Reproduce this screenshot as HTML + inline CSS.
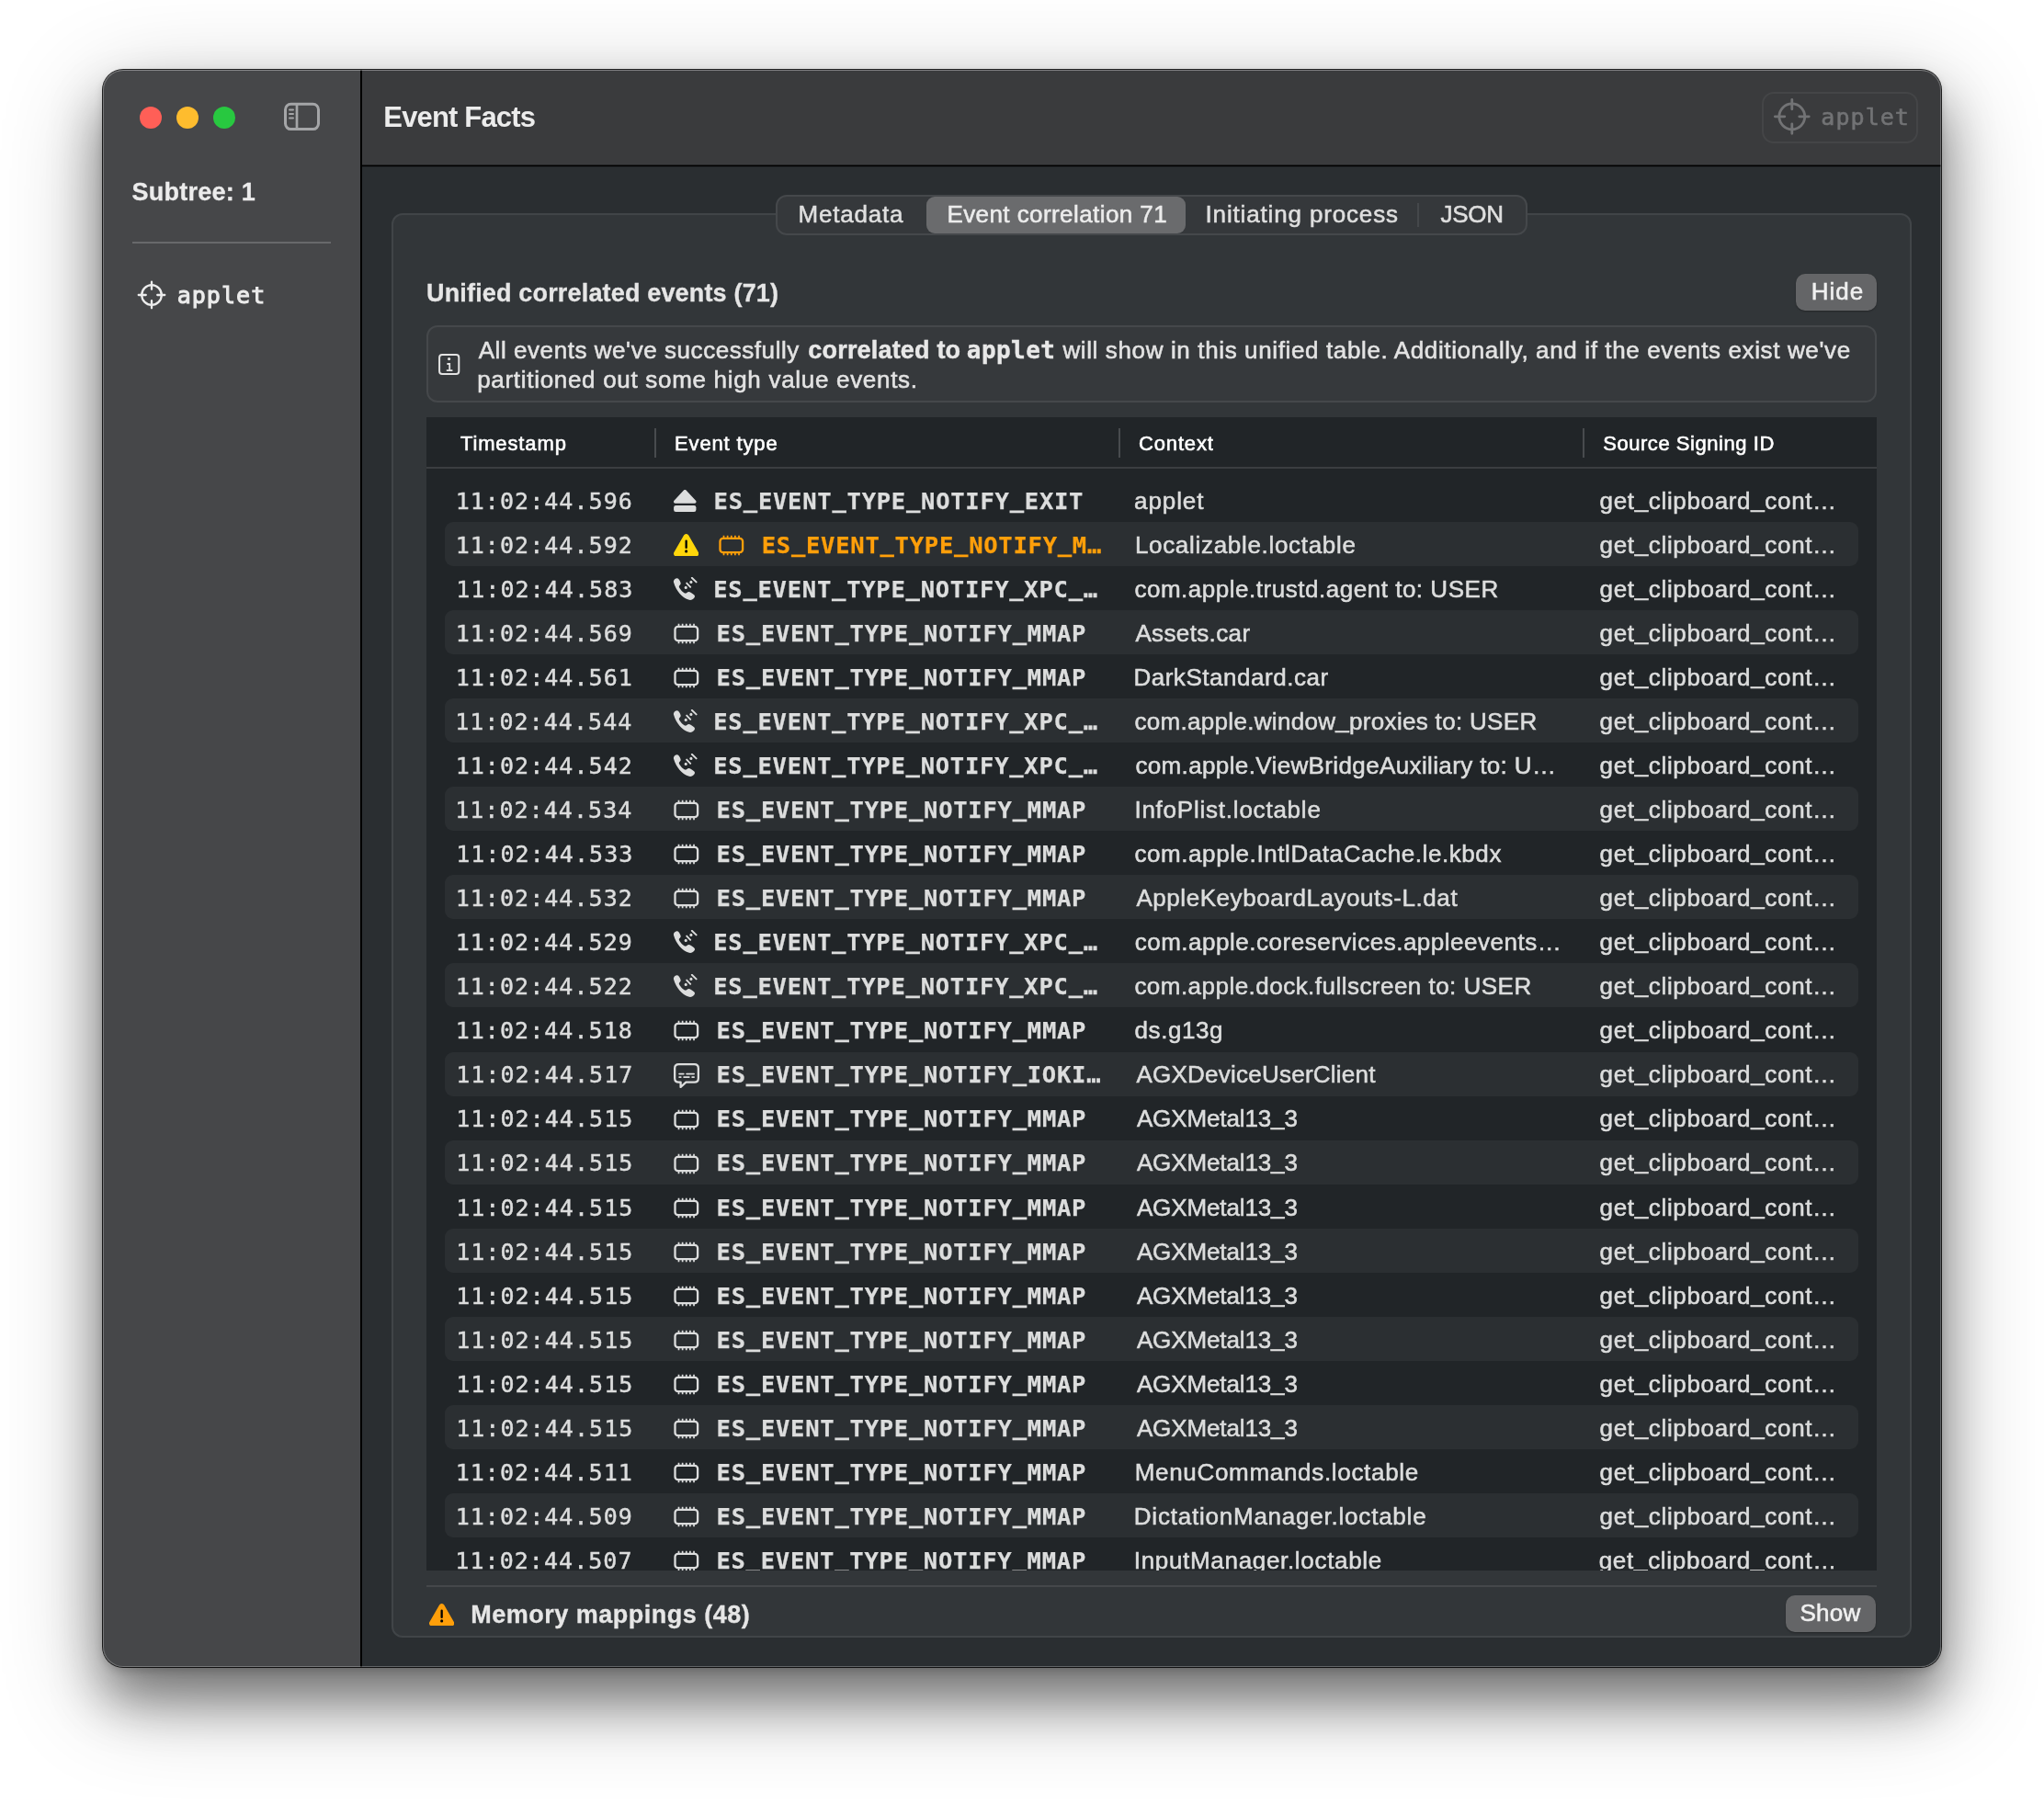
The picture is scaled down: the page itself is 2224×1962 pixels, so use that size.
<!DOCTYPE html><html lang="en"><head><meta charset="utf-8"><title>Event Facts</title><style>
html,body{margin:0;padding:0}
body{width:2224px;height:1962px;background:#fff;position:relative;overflow:hidden;font-kerning:none}
.a{position:absolute;display:block}
.t{position:absolute;display:block;white-space:nowrap;font-kerning:none}
.u{font-style:normal;position:relative;top:-2px}
#shadow{left:112px;top:76px;width:2000px;height:1738px;border-radius:22px;box-shadow:0 0 0 1px rgba(0,0,0,.85),0 4px 10px rgba(0,0,0,.18),0 36px 56px rgba(0,0,0,.42),0 30px 110px rgba(0,0,0,.30)}
#win{left:112px;top:76px;width:2000px;height:1738px;border-radius:22px;overflow:hidden;background:#2a2e31}
#pg{left:-112px;top:-76px;width:2224px;height:1962px;will-change:transform}

</style></head><body>
<div class="a" id="shadow"></div>
<div class="a" id="win"><div class="a" id="pg">
<div class="a" style="left:112px;top:76px;width:280px;height:1738px;background:#464749"></div>
<div class="a" style="left:394px;top:76px;width:1718px;height:104px;background:#3a3b3d"></div>
<div class="a" style="left:394px;top:179px;width:1718px;height:1px;background:rgba(0,0,0,.45)"></div><div class="a" style="left:394px;top:180px;width:1718px;height:1px;background:#000"></div><div class="a" style="left:394px;top:181px;width:1718px;height:1px;background:rgba(0,0,0,.25)"></div>
<div class="a" style="left:392px;top:76px;width:2px;height:1738px;background:#000"></div>
<div class="a" style="left:152px;top:116px;width:24px;height:24px;border-radius:50%;background:#ff5f57"></div>
<div class="a" style="left:192px;top:116px;width:24px;height:24px;border-radius:50%;background:#febc2e"></div>
<div class="a" style="left:232px;top:116px;width:24px;height:24px;border-radius:50%;background:#28c840"></div>
<svg class="a" style="left:307px;top:110px" width="43" height="34" viewBox="307 110 43 34" fill="none" stroke="#a4a5a7"><rect x="310.5" y="113.2" width="36" height="27.4" rx="6" stroke-width="3"/><path d="M323 113V141" stroke-width="2.7"/><path d="M315 119.5H319M315 124H319M315 128.4H319" stroke-width="2" stroke-linecap="round"/></svg>
<div class="a" style="left:144px;top:263px;width:216px;height:2px;background:#68696b"></div>
<svg class="a" style="left:144.50px;top:300.60px" width="40.00" height="40.00" viewBox="-20.00 -20.00 40.00 40.00" fill="none" stroke="#ececec" stroke-width="2.3" stroke-linecap="round"><circle r="10.80"/><path d="M-14.25 0H-6.25M6.25 0H14.25M0 -14.25V-6.25M0 6.25V14.25"/></svg>
<div class="a" style="left:1917px;top:100px;width:170px;height:56px;border-radius:13px;box-sizing:border-box;border:2px solid #444547;background:#3a3b3d"></div>
<svg class="a" style="left:1924.00px;top:101.10px" width="51.60" height="51.60" viewBox="-25.80 -25.80 51.60 51.60" fill="none" stroke="#727375" stroke-width="2.8" stroke-linecap="round"><circle r="13.93"/><path d="M-18.47 0H-7.98M7.98 0H18.47M0 -18.47V-7.98M0 7.98V18.47"/></svg>
<div class="a" style="left:426px;top:232px;width:1654px;height:1550px;border-radius:12px;box-sizing:border-box;border:2px solid #414548;background:#323639"></div>
<div class="a" style="left:844px;top:212px;width:818px;height:44px;border-radius:12px;box-sizing:border-box;border:2px solid #45484b;background:#35383b"></div>
<div class="a" style="left:1008px;top:214px;width:282px;height:40px;border-radius:9px;background:#6a6b6d"></div>
<div class="a" style="left:1542px;top:221px;width:2px;height:26px;background:#45484b"></div>
<div class="a" style="left:1954px;top:298px;width:88px;height:40px;border-radius:10px;background:#646567;box-shadow:0 1px 2px rgba(0,0,0,.3)"></div>
<div class="a" style="left:464px;top:354px;width:1578px;height:84px;border-radius:12px;box-sizing:border-box;border:2px solid #45484b;background:#36393c"></div>
<svg class="a" style="left:476px;top:383px" width="26" height="26" viewBox="476 383 26 26" fill="none" stroke="#e3e3e3"><rect x="478.1" y="385.9" width="21.2" height="21" rx="3" stroke-width="2"/><path d="M486.4 396H489.2V403M485.8 403.2H492.4" stroke-width="1.8"/><circle cx="488.6" cy="390.6" r="1.6" fill="#e3e3e3" stroke="none"/></svg>
<div class="a" style="left:464px;top:454px;width:1578px;height:1255px;background:#212528"></div>
<div class="a" style="left:464px;top:508px;width:1578px;height:2px;background:#3b3e41"></div>
<div class="a" style="left:712px;top:466px;width:2px;height:32px;background:#484b4e"></div>
<div class="a" style="left:1217px;top:466px;width:2px;height:32px;background:#484b4e"></div>
<div class="a" style="left:1722px;top:466px;width:2px;height:32px;background:#484b4e"></div>
<div class="a" style="left:464px;top:510px;width:1578px;height:1199px;overflow:hidden"><div class="a" style="left:-464px;top:-510px;width:2224px;height:1962px">
<svg class="a" style="left:732.70px;top:533.30px" width="25" height="24" viewBox="0 0 25 24" fill="#dcdddd"><path d="M10.93 0.57A1.8 1.8 0 0 1 13.57 0.57L24.02 11.77A1.8 1.8 0 0 1 22.70 14.80L1.80 14.80A1.8 1.8 0 0 1 0.48 11.77Z"/><rect x="0.1" y="17" width="24.3" height="7" rx="2.3"/></svg>
<div class="a" style="left:484px;top:568px;width:1538px;height:48px;border-radius:9px;background:#2b2f32"></div>
<svg class="a" style="left:732.60px;top:580.60px" width="27.3" height="24.4" viewBox="0 0 27.3 24.4"><path d="M11.05 1.50A3.0 3.0 0 0 1 16.25 1.50L26.89 19.90A3.0 3.0 0 0 1 24.30 24.40L3.00 24.40A3.0 3.0 0 0 1 0.41 19.90Z" fill="#ffd60a"/><path d="M13.65 7.7V14.9" stroke="#000" stroke-width="2.3" stroke-linecap="round" fill="none"/><circle cx="13.65" cy="18.9" r="1.55" fill="#000"/></svg>
<svg class="a" style="left:782.00px;top:581.50px" width="28" height="23" viewBox="0 0 28 22.4" fill="none" stroke="#ff9f0a"><rect x="1.5" y="3.6" width="24.6" height="15.2" rx="3.2" stroke-width="2.3"/><path d="M5.50 0.5V3M5.50 19.4V21.9M9.63 0.5V3M9.63 19.4V21.9M13.76 0.5V3M13.76 19.4V21.9M17.89 0.5V3M17.89 19.4V21.9M22.02 0.5V3M22.02 19.4V21.9" stroke-width="1.7"/></svg>
<svg class="a" style="left:732.20px;top:627.80px" width="28" height="26" viewBox="0 0 28 26"><path fill="#dcdddd" d="M1.2 6.2 C0.2 3.6 2.2 1.6 4.4 1.2 C5.6 1 6.4 1.8 7.2 3.2 C8 4.6 9 6.2 8.6 7.6 C8.2 8.8 6.6 9.4 6.8 10.6 C7.4 13 11.2 17 13.4 17.6 C14.8 18 15.4 16.4 17 16 C18.6 15.8 21 17.6 22.8 19 C24.2 20.2 24.4 21.2 23.4 22.6 C21.8 24.8 19.4 25.4 17 24.6 C10.2 22.4 3.4 14.4 1.2 6.2 Z"/><circle cx="14.2" cy="11.4" r="1.55" fill="#dcdddd"/><circle cx="19.9" cy="5.4" r="1.55" fill="#dcdddd"/><path d="M15.2 6.6L19.2 10.8M20.8 0.8L25.6 5.4" stroke="#dcdddd" stroke-width="1.9" stroke-linecap="round" fill="none"/></svg>
<div class="a" style="left:484px;top:664px;width:1538px;height:48px;border-radius:9px;background:#2b2f32"></div>
<svg class="a" style="left:733.00px;top:677.70px" width="28" height="23" viewBox="0 0 28 22.4" fill="none" stroke="#dcdddd"><rect x="1.5" y="3.6" width="24.6" height="15.2" rx="3.2" stroke-width="2.3"/><path d="M5.50 0.5V3M5.50 19.4V21.9M9.63 0.5V3M9.63 19.4V21.9M13.76 0.5V3M13.76 19.4V21.9M17.89 0.5V3M17.89 19.4V21.9M22.02 0.5V3M22.02 19.4V21.9" stroke-width="1.7"/></svg>
<svg class="a" style="left:733.00px;top:725.70px" width="28" height="23" viewBox="0 0 28 22.4" fill="none" stroke="#dcdddd"><rect x="1.5" y="3.6" width="24.6" height="15.2" rx="3.2" stroke-width="2.3"/><path d="M5.50 0.5V3M5.50 19.4V21.9M9.63 0.5V3M9.63 19.4V21.9M13.76 0.5V3M13.76 19.4V21.9M17.89 0.5V3M17.89 19.4V21.9M22.02 0.5V3M22.02 19.4V21.9" stroke-width="1.7"/></svg>
<div class="a" style="left:484px;top:760px;width:1538px;height:48px;border-radius:9px;background:#2b2f32"></div>
<svg class="a" style="left:732.20px;top:771.80px" width="28" height="26" viewBox="0 0 28 26"><path fill="#dcdddd" d="M1.2 6.2 C0.2 3.6 2.2 1.6 4.4 1.2 C5.6 1 6.4 1.8 7.2 3.2 C8 4.6 9 6.2 8.6 7.6 C8.2 8.8 6.6 9.4 6.8 10.6 C7.4 13 11.2 17 13.4 17.6 C14.8 18 15.4 16.4 17 16 C18.6 15.8 21 17.6 22.8 19 C24.2 20.2 24.4 21.2 23.4 22.6 C21.8 24.8 19.4 25.4 17 24.6 C10.2 22.4 3.4 14.4 1.2 6.2 Z"/><circle cx="14.2" cy="11.4" r="1.55" fill="#dcdddd"/><circle cx="19.9" cy="5.4" r="1.55" fill="#dcdddd"/><path d="M15.2 6.6L19.2 10.8M20.8 0.8L25.6 5.4" stroke="#dcdddd" stroke-width="1.9" stroke-linecap="round" fill="none"/></svg>
<svg class="a" style="left:732.20px;top:819.80px" width="28" height="26" viewBox="0 0 28 26"><path fill="#dcdddd" d="M1.2 6.2 C0.2 3.6 2.2 1.6 4.4 1.2 C5.6 1 6.4 1.8 7.2 3.2 C8 4.6 9 6.2 8.6 7.6 C8.2 8.8 6.6 9.4 6.8 10.6 C7.4 13 11.2 17 13.4 17.6 C14.8 18 15.4 16.4 17 16 C18.6 15.8 21 17.6 22.8 19 C24.2 20.2 24.4 21.2 23.4 22.6 C21.8 24.8 19.4 25.4 17 24.6 C10.2 22.4 3.4 14.4 1.2 6.2 Z"/><circle cx="14.2" cy="11.4" r="1.55" fill="#dcdddd"/><circle cx="19.9" cy="5.4" r="1.55" fill="#dcdddd"/><path d="M15.2 6.6L19.2 10.8M20.8 0.8L25.6 5.4" stroke="#dcdddd" stroke-width="1.9" stroke-linecap="round" fill="none"/></svg>
<div class="a" style="left:484px;top:856px;width:1538px;height:48px;border-radius:9px;background:#2b2f32"></div>
<svg class="a" style="left:733.00px;top:869.70px" width="28" height="23" viewBox="0 0 28 22.4" fill="none" stroke="#dcdddd"><rect x="1.5" y="3.6" width="24.6" height="15.2" rx="3.2" stroke-width="2.3"/><path d="M5.50 0.5V3M5.50 19.4V21.9M9.63 0.5V3M9.63 19.4V21.9M13.76 0.5V3M13.76 19.4V21.9M17.89 0.5V3M17.89 19.4V21.9M22.02 0.5V3M22.02 19.4V21.9" stroke-width="1.7"/></svg>
<svg class="a" style="left:733.00px;top:917.70px" width="28" height="23" viewBox="0 0 28 22.4" fill="none" stroke="#dcdddd"><rect x="1.5" y="3.6" width="24.6" height="15.2" rx="3.2" stroke-width="2.3"/><path d="M5.50 0.5V3M5.50 19.4V21.9M9.63 0.5V3M9.63 19.4V21.9M13.76 0.5V3M13.76 19.4V21.9M17.89 0.5V3M17.89 19.4V21.9M22.02 0.5V3M22.02 19.4V21.9" stroke-width="1.7"/></svg>
<div class="a" style="left:484px;top:952px;width:1538px;height:48px;border-radius:9px;background:#2b2f32"></div>
<svg class="a" style="left:733.00px;top:965.70px" width="28" height="23" viewBox="0 0 28 22.4" fill="none" stroke="#dcdddd"><rect x="1.5" y="3.6" width="24.6" height="15.2" rx="3.2" stroke-width="2.3"/><path d="M5.50 0.5V3M5.50 19.4V21.9M9.63 0.5V3M9.63 19.4V21.9M13.76 0.5V3M13.76 19.4V21.9M17.89 0.5V3M17.89 19.4V21.9M22.02 0.5V3M22.02 19.4V21.9" stroke-width="1.7"/></svg>
<svg class="a" style="left:732.20px;top:1011.80px" width="28" height="26" viewBox="0 0 28 26"><path fill="#dcdddd" d="M1.2 6.2 C0.2 3.6 2.2 1.6 4.4 1.2 C5.6 1 6.4 1.8 7.2 3.2 C8 4.6 9 6.2 8.6 7.6 C8.2 8.8 6.6 9.4 6.8 10.6 C7.4 13 11.2 17 13.4 17.6 C14.8 18 15.4 16.4 17 16 C18.6 15.8 21 17.6 22.8 19 C24.2 20.2 24.4 21.2 23.4 22.6 C21.8 24.8 19.4 25.4 17 24.6 C10.2 22.4 3.4 14.4 1.2 6.2 Z"/><circle cx="14.2" cy="11.4" r="1.55" fill="#dcdddd"/><circle cx="19.9" cy="5.4" r="1.55" fill="#dcdddd"/><path d="M15.2 6.6L19.2 10.8M20.8 0.8L25.6 5.4" stroke="#dcdddd" stroke-width="1.9" stroke-linecap="round" fill="none"/></svg>
<div class="a" style="left:484px;top:1048px;width:1538px;height:48px;border-radius:9px;background:#2b2f32"></div>
<svg class="a" style="left:732.20px;top:1059.80px" width="28" height="26" viewBox="0 0 28 26"><path fill="#dcdddd" d="M1.2 6.2 C0.2 3.6 2.2 1.6 4.4 1.2 C5.6 1 6.4 1.8 7.2 3.2 C8 4.6 9 6.2 8.6 7.6 C8.2 8.8 6.6 9.4 6.8 10.6 C7.4 13 11.2 17 13.4 17.6 C14.8 18 15.4 16.4 17 16 C18.6 15.8 21 17.6 22.8 19 C24.2 20.2 24.4 21.2 23.4 22.6 C21.8 24.8 19.4 25.4 17 24.6 C10.2 22.4 3.4 14.4 1.2 6.2 Z"/><circle cx="14.2" cy="11.4" r="1.55" fill="#dcdddd"/><circle cx="19.9" cy="5.4" r="1.55" fill="#dcdddd"/><path d="M15.2 6.6L19.2 10.8M20.8 0.8L25.6 5.4" stroke="#dcdddd" stroke-width="1.9" stroke-linecap="round" fill="none"/></svg>
<svg class="a" style="left:733.00px;top:1109.70px" width="28" height="23" viewBox="0 0 28 22.4" fill="none" stroke="#dcdddd"><rect x="1.5" y="3.6" width="24.6" height="15.2" rx="3.2" stroke-width="2.3"/><path d="M5.50 0.5V3M5.50 19.4V21.9M9.63 0.5V3M9.63 19.4V21.9M13.76 0.5V3M13.76 19.4V21.9M17.89 0.5V3M17.89 19.4V21.9M22.02 0.5V3M22.02 19.4V21.9" stroke-width="1.7"/></svg>
<div class="a" style="left:484px;top:1145px;width:1538px;height:48px;border-radius:9px;background:#2b2f32"></div>
<svg class="a" style="left:733.00px;top:1156.60px" width="28" height="27.5" viewBox="0 0 28 27.5" fill="none" stroke="#dcdddd"><path stroke-width="2.3" stroke-linejoin="round" d="M5.5 1.15 H22.5 Q26.85 1.15 26.85 5.5 V16.2 Q26.85 20.55 22.5 20.55 H13.4 L7.6 26 V20.55 H5.5 Q1.15 20.55 1.15 16.2 V5.5 Q1.15 1.15 5.5 1.15 Z"/><path stroke-width="1.75" stroke-linecap="round" d="M6.1 11.6H10.8M14.1 11.6H22.1M6.1 15H7.8M11.1 15H16.8M20.1 15H22.1"/></svg>
<svg class="a" style="left:733.00px;top:1206.70px" width="28" height="23" viewBox="0 0 28 22.4" fill="none" stroke="#dcdddd"><rect x="1.5" y="3.6" width="24.6" height="15.2" rx="3.2" stroke-width="2.3"/><path d="M5.50 0.5V3M5.50 19.4V21.9M9.63 0.5V3M9.63 19.4V21.9M13.76 0.5V3M13.76 19.4V21.9M17.89 0.5V3M17.89 19.4V21.9M22.02 0.5V3M22.02 19.4V21.9" stroke-width="1.7"/></svg>
<div class="a" style="left:484px;top:1241px;width:1538px;height:48px;border-radius:9px;background:#2b2f32"></div>
<svg class="a" style="left:733.00px;top:1254.70px" width="28" height="23" viewBox="0 0 28 22.4" fill="none" stroke="#dcdddd"><rect x="1.5" y="3.6" width="24.6" height="15.2" rx="3.2" stroke-width="2.3"/><path d="M5.50 0.5V3M5.50 19.4V21.9M9.63 0.5V3M9.63 19.4V21.9M13.76 0.5V3M13.76 19.4V21.9M17.89 0.5V3M17.89 19.4V21.9M22.02 0.5V3M22.02 19.4V21.9" stroke-width="1.7"/></svg>
<svg class="a" style="left:733.00px;top:1302.70px" width="28" height="23" viewBox="0 0 28 22.4" fill="none" stroke="#dcdddd"><rect x="1.5" y="3.6" width="24.6" height="15.2" rx="3.2" stroke-width="2.3"/><path d="M5.50 0.5V3M5.50 19.4V21.9M9.63 0.5V3M9.63 19.4V21.9M13.76 0.5V3M13.76 19.4V21.9M17.89 0.5V3M17.89 19.4V21.9M22.02 0.5V3M22.02 19.4V21.9" stroke-width="1.7"/></svg>
<div class="a" style="left:484px;top:1337px;width:1538px;height:48px;border-radius:9px;background:#2b2f32"></div>
<svg class="a" style="left:733.00px;top:1350.70px" width="28" height="23" viewBox="0 0 28 22.4" fill="none" stroke="#dcdddd"><rect x="1.5" y="3.6" width="24.6" height="15.2" rx="3.2" stroke-width="2.3"/><path d="M5.50 0.5V3M5.50 19.4V21.9M9.63 0.5V3M9.63 19.4V21.9M13.76 0.5V3M13.76 19.4V21.9M17.89 0.5V3M17.89 19.4V21.9M22.02 0.5V3M22.02 19.4V21.9" stroke-width="1.7"/></svg>
<svg class="a" style="left:733.00px;top:1398.70px" width="28" height="23" viewBox="0 0 28 22.4" fill="none" stroke="#dcdddd"><rect x="1.5" y="3.6" width="24.6" height="15.2" rx="3.2" stroke-width="2.3"/><path d="M5.50 0.5V3M5.50 19.4V21.9M9.63 0.5V3M9.63 19.4V21.9M13.76 0.5V3M13.76 19.4V21.9M17.89 0.5V3M17.89 19.4V21.9M22.02 0.5V3M22.02 19.4V21.9" stroke-width="1.7"/></svg>
<div class="a" style="left:484px;top:1433px;width:1538px;height:48px;border-radius:9px;background:#2b2f32"></div>
<svg class="a" style="left:733.00px;top:1446.70px" width="28" height="23" viewBox="0 0 28 22.4" fill="none" stroke="#dcdddd"><rect x="1.5" y="3.6" width="24.6" height="15.2" rx="3.2" stroke-width="2.3"/><path d="M5.50 0.5V3M5.50 19.4V21.9M9.63 0.5V3M9.63 19.4V21.9M13.76 0.5V3M13.76 19.4V21.9M17.89 0.5V3M17.89 19.4V21.9M22.02 0.5V3M22.02 19.4V21.9" stroke-width="1.7"/></svg>
<svg class="a" style="left:733.00px;top:1494.70px" width="28" height="23" viewBox="0 0 28 22.4" fill="none" stroke="#dcdddd"><rect x="1.5" y="3.6" width="24.6" height="15.2" rx="3.2" stroke-width="2.3"/><path d="M5.50 0.5V3M5.50 19.4V21.9M9.63 0.5V3M9.63 19.4V21.9M13.76 0.5V3M13.76 19.4V21.9M17.89 0.5V3M17.89 19.4V21.9M22.02 0.5V3M22.02 19.4V21.9" stroke-width="1.7"/></svg>
<div class="a" style="left:484px;top:1529px;width:1538px;height:48px;border-radius:9px;background:#2b2f32"></div>
<svg class="a" style="left:733.00px;top:1542.70px" width="28" height="23" viewBox="0 0 28 22.4" fill="none" stroke="#dcdddd"><rect x="1.5" y="3.6" width="24.6" height="15.2" rx="3.2" stroke-width="2.3"/><path d="M5.50 0.5V3M5.50 19.4V21.9M9.63 0.5V3M9.63 19.4V21.9M13.76 0.5V3M13.76 19.4V21.9M17.89 0.5V3M17.89 19.4V21.9M22.02 0.5V3M22.02 19.4V21.9" stroke-width="1.7"/></svg>
<svg class="a" style="left:733.00px;top:1590.70px" width="28" height="23" viewBox="0 0 28 22.4" fill="none" stroke="#dcdddd"><rect x="1.5" y="3.6" width="24.6" height="15.2" rx="3.2" stroke-width="2.3"/><path d="M5.50 0.5V3M5.50 19.4V21.9M9.63 0.5V3M9.63 19.4V21.9M13.76 0.5V3M13.76 19.4V21.9M17.89 0.5V3M17.89 19.4V21.9M22.02 0.5V3M22.02 19.4V21.9" stroke-width="1.7"/></svg>
<div class="a" style="left:484px;top:1625px;width:1538px;height:48px;border-radius:9px;background:#2b2f32"></div>
<svg class="a" style="left:733.00px;top:1638.70px" width="28" height="23" viewBox="0 0 28 22.4" fill="none" stroke="#dcdddd"><rect x="1.5" y="3.6" width="24.6" height="15.2" rx="3.2" stroke-width="2.3"/><path d="M5.50 0.5V3M5.50 19.4V21.9M9.63 0.5V3M9.63 19.4V21.9M13.76 0.5V3M13.76 19.4V21.9M17.89 0.5V3M17.89 19.4V21.9M22.02 0.5V3M22.02 19.4V21.9" stroke-width="1.7"/></svg>
<svg class="a" style="left:733.00px;top:1686.70px" width="28" height="23" viewBox="0 0 28 22.4" fill="none" stroke="#dcdddd"><rect x="1.5" y="3.6" width="24.6" height="15.2" rx="3.2" stroke-width="2.3"/><path d="M5.50 0.5V3M5.50 19.4V21.9M9.63 0.5V3M9.63 19.4V21.9M13.76 0.5V3M13.76 19.4V21.9M17.89 0.5V3M17.89 19.4V21.9M22.02 0.5V3M22.02 19.4V21.9" stroke-width="1.7"/></svg>
<span class="t" id="r0a" style="left:495.65px;top:533.00px;font:400 25px/1 'DejaVu Sans Mono','Liberation Mono',monospace;color:#dcdddd;letter-spacing:1.049px;-webkit-text-stroke:0.45px #dcdddd;">11:02:44.596</span>
<span class="t" id="r0b" style="left:776.62px;top:533.00px;font:700 25.5px/1 'DejaVu Sans Mono','Liberation Mono',monospace;color:#dcdddd;letter-spacing:0.748px;-webkit-text-stroke:0.25px #dcdddd;">ES<i class="u">_</i>EVENT<i class="u">_</i>TYPE<i class="u">_</i>NOTIFY<i class="u">_</i>EXIT</span>
<span class="t" id="r0c" style="left:1234.00px;top:532.00px;font:400 26px/1 'Liberation Sans', sans-serif;color:#dcdddd;letter-spacing:0.917px;-webkit-text-stroke:0.55px #dcdddd;">applet</span>
<span class="t" id="r0d" style="left:1740.60px;top:532.00px;font:400 26px/1 'Liberation Sans', sans-serif;color:#dcdddd;letter-spacing:0.655px;-webkit-text-stroke:0.55px #dcdddd;">get<i class="u">_</i>clipboard<i class="u">_</i>cont…</span>
<span class="t" id="r1a" style="left:495.65px;top:581.00px;font:400 25px/1 'DejaVu Sans Mono','Liberation Mono',monospace;color:#dcdddd;letter-spacing:1.049px;-webkit-text-stroke:0.45px #dcdddd;">11:02:44.592</span>
<span class="t" id="r1b" style="left:828.68px;top:581.00px;font:700 25.5px/1 'DejaVu Sans Mono','Liberation Mono',monospace;color:#ff9f0a;letter-spacing:0.748px;-webkit-text-stroke:0.25px #ff9f0a;">ES<i class="u">_</i>EVENT<i class="u">_</i>TYPE<i class="u">_</i>NOTIFY<i class="u">_</i>M…</span>
<span class="t" id="r1c" style="left:1234.90px;top:580.00px;font:400 26px/1 'Liberation Sans', sans-serif;color:#dcdddd;letter-spacing:0.686px;-webkit-text-stroke:0.55px #dcdddd;">Localizable.loctable</span>
<span class="t" id="r1d" style="left:1740.60px;top:580.00px;font:400 26px/1 'Liberation Sans', sans-serif;color:#dcdddd;letter-spacing:0.655px;-webkit-text-stroke:0.55px #dcdddd;">get<i class="u">_</i>clipboard<i class="u">_</i>cont…</span>
<span class="t" id="r2a" style="left:496.15px;top:629.00px;font:400 25px/1 'DejaVu Sans Mono','Liberation Mono',monospace;color:#dcdddd;letter-spacing:1.049px;-webkit-text-stroke:0.45px #dcdddd;">11:02:44.583</span>
<span class="t" id="r2b" style="left:776.20px;top:629.00px;font:700 25.5px/1 'DejaVu Sans Mono','Liberation Mono',monospace;color:#dcdddd;letter-spacing:0.748px;-webkit-text-stroke:0.25px #dcdddd;">ES<i class="u">_</i>EVENT<i class="u">_</i>TYPE<i class="u">_</i>NOTIFY<i class="u">_</i>XPC<i class="u">_</i>…</span>
<span class="t" id="r2c" style="left:1234.40px;top:628.00px;font:400 26px/1 'Liberation Sans', sans-serif;color:#dcdddd;letter-spacing:0.523px;-webkit-text-stroke:0.55px #dcdddd;">com.apple.trustd.agent to: USER</span>
<span class="t" id="r2d" style="left:1740.60px;top:628.00px;font:400 26px/1 'Liberation Sans', sans-serif;color:#dcdddd;letter-spacing:0.655px;-webkit-text-stroke:0.55px #dcdddd;">get<i class="u">_</i>clipboard<i class="u">_</i>cont…</span>
<span class="t" id="r3a" style="left:495.65px;top:677.00px;font:400 25px/1 'DejaVu Sans Mono','Liberation Mono',monospace;color:#dcdddd;letter-spacing:1.049px;-webkit-text-stroke:0.45px #dcdddd;">11:02:44.569</span>
<span class="t" id="r3b" style="left:779.62px;top:677.00px;font:700 25.5px/1 'DejaVu Sans Mono','Liberation Mono',monospace;color:#dcdddd;letter-spacing:0.748px;-webkit-text-stroke:0.25px #dcdddd;">ES<i class="u">_</i>EVENT<i class="u">_</i>TYPE<i class="u">_</i>NOTIFY<i class="u">_</i>MMAP</span>
<span class="t" id="r3c" style="left:1235.40px;top:676.00px;font:400 26px/1 'Liberation Sans', sans-serif;color:#dcdddd;letter-spacing:0.366px;-webkit-text-stroke:0.55px #dcdddd;">Assets.car</span>
<span class="t" id="r3d" style="left:1740.60px;top:676.00px;font:400 26px/1 'Liberation Sans', sans-serif;color:#dcdddd;letter-spacing:0.655px;-webkit-text-stroke:0.55px #dcdddd;">get<i class="u">_</i>clipboard<i class="u">_</i>cont…</span>
<span class="t" id="r4a" style="left:495.65px;top:725.00px;font:400 25px/1 'DejaVu Sans Mono','Liberation Mono',monospace;color:#dcdddd;letter-spacing:1.049px;-webkit-text-stroke:0.45px #dcdddd;">11:02:44.561</span>
<span class="t" id="r4b" style="left:779.62px;top:725.00px;font:700 25.5px/1 'DejaVu Sans Mono','Liberation Mono',monospace;color:#dcdddd;letter-spacing:0.748px;-webkit-text-stroke:0.25px #dcdddd;">ES<i class="u">_</i>EVENT<i class="u">_</i>TYPE<i class="u">_</i>NOTIFY<i class="u">_</i>MMAP</span>
<span class="t" id="r4c" style="left:1233.40px;top:724.00px;font:400 26px/1 'Liberation Sans', sans-serif;color:#dcdddd;letter-spacing:0.527px;-webkit-text-stroke:0.55px #dcdddd;">DarkStandard.car</span>
<span class="t" id="r4d" style="left:1740.60px;top:724.00px;font:400 26px/1 'Liberation Sans', sans-serif;color:#dcdddd;letter-spacing:0.655px;-webkit-text-stroke:0.55px #dcdddd;">get<i class="u">_</i>clipboard<i class="u">_</i>cont…</span>
<span class="t" id="r5a" style="left:495.15px;top:773.00px;font:400 25px/1 'DejaVu Sans Mono','Liberation Mono',monospace;color:#dcdddd;letter-spacing:1.049px;-webkit-text-stroke:0.45px #dcdddd;">11:02:44.544</span>
<span class="t" id="r5b" style="left:776.20px;top:773.00px;font:700 25.5px/1 'DejaVu Sans Mono','Liberation Mono',monospace;color:#dcdddd;letter-spacing:0.748px;-webkit-text-stroke:0.25px #dcdddd;">ES<i class="u">_</i>EVENT<i class="u">_</i>TYPE<i class="u">_</i>NOTIFY<i class="u">_</i>XPC<i class="u">_</i>…</span>
<span class="t" id="r5c" style="left:1234.40px;top:772.00px;font:400 26px/1 'Liberation Sans', sans-serif;color:#dcdddd;letter-spacing:0.313px;-webkit-text-stroke:0.55px #dcdddd;">com.apple.window<i class="u">_</i>proxies to: USER</span>
<span class="t" id="r5d" style="left:1740.60px;top:772.00px;font:400 26px/1 'Liberation Sans', sans-serif;color:#dcdddd;letter-spacing:0.655px;-webkit-text-stroke:0.55px #dcdddd;">get<i class="u">_</i>clipboard<i class="u">_</i>cont…</span>
<span class="t" id="r6a" style="left:495.65px;top:821.00px;font:400 25px/1 'DejaVu Sans Mono','Liberation Mono',monospace;color:#dcdddd;letter-spacing:1.049px;-webkit-text-stroke:0.45px #dcdddd;">11:02:44.542</span>
<span class="t" id="r6b" style="left:776.20px;top:821.00px;font:700 25.5px/1 'DejaVu Sans Mono','Liberation Mono',monospace;color:#dcdddd;letter-spacing:0.748px;-webkit-text-stroke:0.25px #dcdddd;">ES<i class="u">_</i>EVENT<i class="u">_</i>TYPE<i class="u">_</i>NOTIFY<i class="u">_</i>XPC<i class="u">_</i>…</span>
<span class="t" id="r6c" style="left:1235.40px;top:820.00px;font:400 26px/1 'Liberation Sans', sans-serif;color:#dcdddd;letter-spacing:0.369px;-webkit-text-stroke:0.55px #dcdddd;">com.apple.ViewBridgeAuxiliary to: U…</span>
<span class="t" id="r6d" style="left:1740.60px;top:820.00px;font:400 26px/1 'Liberation Sans', sans-serif;color:#dcdddd;letter-spacing:0.655px;-webkit-text-stroke:0.55px #dcdddd;">get<i class="u">_</i>clipboard<i class="u">_</i>cont…</span>
<span class="t" id="r7a" style="left:495.15px;top:869.00px;font:400 25px/1 'DejaVu Sans Mono','Liberation Mono',monospace;color:#dcdddd;letter-spacing:1.049px;-webkit-text-stroke:0.45px #dcdddd;">11:02:44.534</span>
<span class="t" id="r7b" style="left:779.62px;top:869.00px;font:700 25.5px/1 'DejaVu Sans Mono','Liberation Mono',monospace;color:#dcdddd;letter-spacing:0.748px;-webkit-text-stroke:0.25px #dcdddd;">ES<i class="u">_</i>EVENT<i class="u">_</i>TYPE<i class="u">_</i>NOTIFY<i class="u">_</i>MMAP</span>
<span class="t" id="r7c" style="left:1234.40px;top:868.00px;font:400 26px/1 'Liberation Sans', sans-serif;color:#dcdddd;letter-spacing:0.773px;-webkit-text-stroke:0.55px #dcdddd;">InfoPlist.loctable</span>
<span class="t" id="r7d" style="left:1740.60px;top:868.00px;font:400 26px/1 'Liberation Sans', sans-serif;color:#dcdddd;letter-spacing:0.655px;-webkit-text-stroke:0.55px #dcdddd;">get<i class="u">_</i>clipboard<i class="u">_</i>cont…</span>
<span class="t" id="r8a" style="left:496.15px;top:917.00px;font:400 25px/1 'DejaVu Sans Mono','Liberation Mono',monospace;color:#dcdddd;letter-spacing:1.049px;-webkit-text-stroke:0.45px #dcdddd;">11:02:44.533</span>
<span class="t" id="r8b" style="left:779.62px;top:917.00px;font:700 25.5px/1 'DejaVu Sans Mono','Liberation Mono',monospace;color:#dcdddd;letter-spacing:0.748px;-webkit-text-stroke:0.25px #dcdddd;">ES<i class="u">_</i>EVENT<i class="u">_</i>TYPE<i class="u">_</i>NOTIFY<i class="u">_</i>MMAP</span>
<span class="t" id="r8c" style="left:1234.40px;top:916.00px;font:400 26px/1 'Liberation Sans', sans-serif;color:#dcdddd;letter-spacing:0.582px;-webkit-text-stroke:0.55px #dcdddd;">com.apple.IntlDataCache.le.kbdx</span>
<span class="t" id="r8d" style="left:1740.60px;top:916.00px;font:400 26px/1 'Liberation Sans', sans-serif;color:#dcdddd;letter-spacing:0.655px;-webkit-text-stroke:0.55px #dcdddd;">get<i class="u">_</i>clipboard<i class="u">_</i>cont…</span>
<span class="t" id="r9a" style="left:495.65px;top:965.00px;font:400 25px/1 'DejaVu Sans Mono','Liberation Mono',monospace;color:#dcdddd;letter-spacing:1.049px;-webkit-text-stroke:0.45px #dcdddd;">11:02:44.532</span>
<span class="t" id="r9b" style="left:779.62px;top:965.00px;font:700 25.5px/1 'DejaVu Sans Mono','Liberation Mono',monospace;color:#dcdddd;letter-spacing:0.748px;-webkit-text-stroke:0.25px #dcdddd;">ES<i class="u">_</i>EVENT<i class="u">_</i>TYPE<i class="u">_</i>NOTIFY<i class="u">_</i>MMAP</span>
<span class="t" id="r9c" style="left:1236.40px;top:964.00px;font:400 26px/1 'Liberation Sans', sans-serif;color:#dcdddd;letter-spacing:0.555px;-webkit-text-stroke:0.55px #dcdddd;">AppleKeyboardLayouts-L.dat</span>
<span class="t" id="r9d" style="left:1740.60px;top:964.00px;font:400 26px/1 'Liberation Sans', sans-serif;color:#dcdddd;letter-spacing:0.655px;-webkit-text-stroke:0.55px #dcdddd;">get<i class="u">_</i>clipboard<i class="u">_</i>cont…</span>
<span class="t" id="r10a" style="left:495.65px;top:1013.00px;font:400 25px/1 'DejaVu Sans Mono','Liberation Mono',monospace;color:#dcdddd;letter-spacing:1.049px;-webkit-text-stroke:0.45px #dcdddd;">11:02:44.529</span>
<span class="t" id="r10b" style="left:776.20px;top:1013.00px;font:700 25.5px/1 'DejaVu Sans Mono','Liberation Mono',monospace;color:#dcdddd;letter-spacing:0.748px;-webkit-text-stroke:0.25px #dcdddd;">ES<i class="u">_</i>EVENT<i class="u">_</i>TYPE<i class="u">_</i>NOTIFY<i class="u">_</i>XPC<i class="u">_</i>…</span>
<span class="t" id="r10c" style="left:1234.70px;top:1012.00px;font:400 26px/1 'Liberation Sans', sans-serif;color:#dcdddd;letter-spacing:0.516px;-webkit-text-stroke:0.55px #dcdddd;">com.apple.coreservices.appleevents…</span>
<span class="t" id="r10d" style="left:1740.60px;top:1012.00px;font:400 26px/1 'Liberation Sans', sans-serif;color:#dcdddd;letter-spacing:0.655px;-webkit-text-stroke:0.55px #dcdddd;">get<i class="u">_</i>clipboard<i class="u">_</i>cont…</span>
<span class="t" id="r11a" style="left:495.65px;top:1061.00px;font:400 25px/1 'DejaVu Sans Mono','Liberation Mono',monospace;color:#dcdddd;letter-spacing:1.049px;-webkit-text-stroke:0.45px #dcdddd;">11:02:44.522</span>
<span class="t" id="r11b" style="left:776.20px;top:1061.00px;font:700 25.5px/1 'DejaVu Sans Mono','Liberation Mono',monospace;color:#dcdddd;letter-spacing:0.748px;-webkit-text-stroke:0.25px #dcdddd;">ES<i class="u">_</i>EVENT<i class="u">_</i>TYPE<i class="u">_</i>NOTIFY<i class="u">_</i>XPC<i class="u">_</i>…</span>
<span class="t" id="r11c" style="left:1234.40px;top:1060.00px;font:400 26px/1 'Liberation Sans', sans-serif;color:#dcdddd;letter-spacing:0.472px;-webkit-text-stroke:0.55px #dcdddd;">com.apple.dock.fullscreen to: USER</span>
<span class="t" id="r11d" style="left:1740.60px;top:1060.00px;font:400 26px/1 'Liberation Sans', sans-serif;color:#dcdddd;letter-spacing:0.655px;-webkit-text-stroke:0.55px #dcdddd;">get<i class="u">_</i>clipboard<i class="u">_</i>cont…</span>
<span class="t" id="r12a" style="left:495.65px;top:1109.00px;font:400 25px/1 'DejaVu Sans Mono','Liberation Mono',monospace;color:#dcdddd;letter-spacing:1.049px;-webkit-text-stroke:0.45px #dcdddd;">11:02:44.518</span>
<span class="t" id="r12b" style="left:779.62px;top:1109.00px;font:700 25.5px/1 'DejaVu Sans Mono','Liberation Mono',monospace;color:#dcdddd;letter-spacing:0.748px;-webkit-text-stroke:0.25px #dcdddd;">ES<i class="u">_</i>EVENT<i class="u">_</i>TYPE<i class="u">_</i>NOTIFY<i class="u">_</i>MMAP</span>
<span class="t" id="r12c" style="left:1234.60px;top:1108.00px;font:400 26px/1 'Liberation Sans', sans-serif;color:#dcdddd;letter-spacing:0.556px;-webkit-text-stroke:0.55px #dcdddd;">ds.g13g</span>
<span class="t" id="r12d" style="left:1740.60px;top:1108.00px;font:400 26px/1 'Liberation Sans', sans-serif;color:#dcdddd;letter-spacing:0.655px;-webkit-text-stroke:0.55px #dcdddd;">get<i class="u">_</i>clipboard<i class="u">_</i>cont…</span>
<span class="t" id="r13a" style="left:496.15px;top:1157.00px;font:400 25px/1 'DejaVu Sans Mono','Liberation Mono',monospace;color:#dcdddd;letter-spacing:1.049px;-webkit-text-stroke:0.45px #dcdddd;">11:02:44.517</span>
<span class="t" id="r13b" style="left:779.60px;top:1157.00px;font:700 25.5px/1 'DejaVu Sans Mono','Liberation Mono',monospace;color:#dcdddd;letter-spacing:0.748px;-webkit-text-stroke:0.25px #dcdddd;">ES<i class="u">_</i>EVENT<i class="u">_</i>TYPE<i class="u">_</i>NOTIFY<i class="u">_</i>IOKI…</span>
<span class="t" id="r13c" style="left:1236.50px;top:1156.00px;font:400 26px/1 'Liberation Sans', sans-serif;color:#dcdddd;letter-spacing:0.232px;-webkit-text-stroke:0.55px #dcdddd;">AGXDeviceUserClient</span>
<span class="t" id="r13d" style="left:1740.60px;top:1156.00px;font:400 26px/1 'Liberation Sans', sans-serif;color:#dcdddd;letter-spacing:0.655px;-webkit-text-stroke:0.55px #dcdddd;">get<i class="u">_</i>clipboard<i class="u">_</i>cont…</span>
<span class="t" id="r14a" style="left:496.15px;top:1205.00px;font:400 25px/1 'DejaVu Sans Mono','Liberation Mono',monospace;color:#dcdddd;letter-spacing:1.049px;-webkit-text-stroke:0.45px #dcdddd;">11:02:44.515</span>
<span class="t" id="r14b" style="left:779.62px;top:1205.00px;font:700 25.5px/1 'DejaVu Sans Mono','Liberation Mono',monospace;color:#dcdddd;letter-spacing:0.748px;-webkit-text-stroke:0.25px #dcdddd;">ES<i class="u">_</i>EVENT<i class="u">_</i>TYPE<i class="u">_</i>NOTIFY<i class="u">_</i>MMAP</span>
<span class="t" id="r14c" style="left:1236.90px;top:1204.00px;font:400 26px/1 'Liberation Sans', sans-serif;color:#dcdddd;letter-spacing:-0.124px;-webkit-text-stroke:0.55px #dcdddd;">AGXMetal13<i class="u">_</i>3</span>
<span class="t" id="r14d" style="left:1740.60px;top:1204.00px;font:400 26px/1 'Liberation Sans', sans-serif;color:#dcdddd;letter-spacing:0.655px;-webkit-text-stroke:0.55px #dcdddd;">get<i class="u">_</i>clipboard<i class="u">_</i>cont…</span>
<span class="t" id="r15a" style="left:496.15px;top:1253.00px;font:400 25px/1 'DejaVu Sans Mono','Liberation Mono',monospace;color:#dcdddd;letter-spacing:1.049px;-webkit-text-stroke:0.45px #dcdddd;">11:02:44.515</span>
<span class="t" id="r15b" style="left:779.62px;top:1253.00px;font:700 25.5px/1 'DejaVu Sans Mono','Liberation Mono',monospace;color:#dcdddd;letter-spacing:0.748px;-webkit-text-stroke:0.25px #dcdddd;">ES<i class="u">_</i>EVENT<i class="u">_</i>TYPE<i class="u">_</i>NOTIFY<i class="u">_</i>MMAP</span>
<span class="t" id="r15c" style="left:1236.90px;top:1252.00px;font:400 26px/1 'Liberation Sans', sans-serif;color:#dcdddd;letter-spacing:-0.124px;-webkit-text-stroke:0.55px #dcdddd;">AGXMetal13<i class="u">_</i>3</span>
<span class="t" id="r15d" style="left:1740.60px;top:1252.00px;font:400 26px/1 'Liberation Sans', sans-serif;color:#dcdddd;letter-spacing:0.655px;-webkit-text-stroke:0.55px #dcdddd;">get<i class="u">_</i>clipboard<i class="u">_</i>cont…</span>
<span class="t" id="r16a" style="left:496.15px;top:1302.00px;font:400 25px/1 'DejaVu Sans Mono','Liberation Mono',monospace;color:#dcdddd;letter-spacing:1.049px;-webkit-text-stroke:0.45px #dcdddd;">11:02:44.515</span>
<span class="t" id="r16b" style="left:779.62px;top:1302.00px;font:700 25.5px/1 'DejaVu Sans Mono','Liberation Mono',monospace;color:#dcdddd;letter-spacing:0.748px;-webkit-text-stroke:0.25px #dcdddd;">ES<i class="u">_</i>EVENT<i class="u">_</i>TYPE<i class="u">_</i>NOTIFY<i class="u">_</i>MMAP</span>
<span class="t" id="r16c" style="left:1236.90px;top:1301.00px;font:400 26px/1 'Liberation Sans', sans-serif;color:#dcdddd;letter-spacing:-0.124px;-webkit-text-stroke:0.55px #dcdddd;">AGXMetal13<i class="u">_</i>3</span>
<span class="t" id="r16d" style="left:1740.60px;top:1301.00px;font:400 26px/1 'Liberation Sans', sans-serif;color:#dcdddd;letter-spacing:0.655px;-webkit-text-stroke:0.55px #dcdddd;">get<i class="u">_</i>clipboard<i class="u">_</i>cont…</span>
<span class="t" id="r17a" style="left:496.15px;top:1350.00px;font:400 25px/1 'DejaVu Sans Mono','Liberation Mono',monospace;color:#dcdddd;letter-spacing:1.049px;-webkit-text-stroke:0.45px #dcdddd;">11:02:44.515</span>
<span class="t" id="r17b" style="left:779.62px;top:1350.00px;font:700 25.5px/1 'DejaVu Sans Mono','Liberation Mono',monospace;color:#dcdddd;letter-spacing:0.748px;-webkit-text-stroke:0.25px #dcdddd;">ES<i class="u">_</i>EVENT<i class="u">_</i>TYPE<i class="u">_</i>NOTIFY<i class="u">_</i>MMAP</span>
<span class="t" id="r17c" style="left:1236.90px;top:1349.00px;font:400 26px/1 'Liberation Sans', sans-serif;color:#dcdddd;letter-spacing:-0.124px;-webkit-text-stroke:0.55px #dcdddd;">AGXMetal13<i class="u">_</i>3</span>
<span class="t" id="r17d" style="left:1740.60px;top:1349.00px;font:400 26px/1 'Liberation Sans', sans-serif;color:#dcdddd;letter-spacing:0.655px;-webkit-text-stroke:0.55px #dcdddd;">get<i class="u">_</i>clipboard<i class="u">_</i>cont…</span>
<span class="t" id="r18a" style="left:496.15px;top:1398.00px;font:400 25px/1 'DejaVu Sans Mono','Liberation Mono',monospace;color:#dcdddd;letter-spacing:1.049px;-webkit-text-stroke:0.45px #dcdddd;">11:02:44.515</span>
<span class="t" id="r18b" style="left:779.62px;top:1398.00px;font:700 25.5px/1 'DejaVu Sans Mono','Liberation Mono',monospace;color:#dcdddd;letter-spacing:0.748px;-webkit-text-stroke:0.25px #dcdddd;">ES<i class="u">_</i>EVENT<i class="u">_</i>TYPE<i class="u">_</i>NOTIFY<i class="u">_</i>MMAP</span>
<span class="t" id="r18c" style="left:1236.90px;top:1397.00px;font:400 26px/1 'Liberation Sans', sans-serif;color:#dcdddd;letter-spacing:-0.124px;-webkit-text-stroke:0.55px #dcdddd;">AGXMetal13<i class="u">_</i>3</span>
<span class="t" id="r18d" style="left:1740.60px;top:1397.00px;font:400 26px/1 'Liberation Sans', sans-serif;color:#dcdddd;letter-spacing:0.655px;-webkit-text-stroke:0.55px #dcdddd;">get<i class="u">_</i>clipboard<i class="u">_</i>cont…</span>
<span class="t" id="r19a" style="left:496.15px;top:1446.00px;font:400 25px/1 'DejaVu Sans Mono','Liberation Mono',monospace;color:#dcdddd;letter-spacing:1.049px;-webkit-text-stroke:0.45px #dcdddd;">11:02:44.515</span>
<span class="t" id="r19b" style="left:779.62px;top:1446.00px;font:700 25.5px/1 'DejaVu Sans Mono','Liberation Mono',monospace;color:#dcdddd;letter-spacing:0.748px;-webkit-text-stroke:0.25px #dcdddd;">ES<i class="u">_</i>EVENT<i class="u">_</i>TYPE<i class="u">_</i>NOTIFY<i class="u">_</i>MMAP</span>
<span class="t" id="r19c" style="left:1236.90px;top:1445.00px;font:400 26px/1 'Liberation Sans', sans-serif;color:#dcdddd;letter-spacing:-0.124px;-webkit-text-stroke:0.55px #dcdddd;">AGXMetal13<i class="u">_</i>3</span>
<span class="t" id="r19d" style="left:1740.60px;top:1445.00px;font:400 26px/1 'Liberation Sans', sans-serif;color:#dcdddd;letter-spacing:0.655px;-webkit-text-stroke:0.55px #dcdddd;">get<i class="u">_</i>clipboard<i class="u">_</i>cont…</span>
<span class="t" id="r20a" style="left:496.15px;top:1494.00px;font:400 25px/1 'DejaVu Sans Mono','Liberation Mono',monospace;color:#dcdddd;letter-spacing:1.049px;-webkit-text-stroke:0.45px #dcdddd;">11:02:44.515</span>
<span class="t" id="r20b" style="left:779.62px;top:1494.00px;font:700 25.5px/1 'DejaVu Sans Mono','Liberation Mono',monospace;color:#dcdddd;letter-spacing:0.748px;-webkit-text-stroke:0.25px #dcdddd;">ES<i class="u">_</i>EVENT<i class="u">_</i>TYPE<i class="u">_</i>NOTIFY<i class="u">_</i>MMAP</span>
<span class="t" id="r20c" style="left:1236.90px;top:1493.00px;font:400 26px/1 'Liberation Sans', sans-serif;color:#dcdddd;letter-spacing:-0.124px;-webkit-text-stroke:0.55px #dcdddd;">AGXMetal13<i class="u">_</i>3</span>
<span class="t" id="r20d" style="left:1740.60px;top:1493.00px;font:400 26px/1 'Liberation Sans', sans-serif;color:#dcdddd;letter-spacing:0.655px;-webkit-text-stroke:0.55px #dcdddd;">get<i class="u">_</i>clipboard<i class="u">_</i>cont…</span>
<span class="t" id="r21a" style="left:496.15px;top:1542.00px;font:400 25px/1 'DejaVu Sans Mono','Liberation Mono',monospace;color:#dcdddd;letter-spacing:1.049px;-webkit-text-stroke:0.45px #dcdddd;">11:02:44.515</span>
<span class="t" id="r21b" style="left:779.62px;top:1542.00px;font:700 25.5px/1 'DejaVu Sans Mono','Liberation Mono',monospace;color:#dcdddd;letter-spacing:0.748px;-webkit-text-stroke:0.25px #dcdddd;">ES<i class="u">_</i>EVENT<i class="u">_</i>TYPE<i class="u">_</i>NOTIFY<i class="u">_</i>MMAP</span>
<span class="t" id="r21c" style="left:1236.90px;top:1541.00px;font:400 26px/1 'Liberation Sans', sans-serif;color:#dcdddd;letter-spacing:-0.124px;-webkit-text-stroke:0.55px #dcdddd;">AGXMetal13<i class="u">_</i>3</span>
<span class="t" id="r21d" style="left:1740.60px;top:1541.00px;font:400 26px/1 'Liberation Sans', sans-serif;color:#dcdddd;letter-spacing:0.655px;-webkit-text-stroke:0.55px #dcdddd;">get<i class="u">_</i>clipboard<i class="u">_</i>cont…</span>
<span class="t" id="r22a" style="left:495.65px;top:1590.00px;font:400 25px/1 'DejaVu Sans Mono','Liberation Mono',monospace;color:#dcdddd;letter-spacing:1.049px;-webkit-text-stroke:0.45px #dcdddd;">11:02:44.511</span>
<span class="t" id="r22b" style="left:779.62px;top:1590.00px;font:700 25.5px/1 'DejaVu Sans Mono','Liberation Mono',monospace;color:#dcdddd;letter-spacing:0.748px;-webkit-text-stroke:0.25px #dcdddd;">ES<i class="u">_</i>EVENT<i class="u">_</i>TYPE<i class="u">_</i>NOTIFY<i class="u">_</i>MMAP</span>
<span class="t" id="r22c" style="left:1234.70px;top:1589.00px;font:400 26px/1 'Liberation Sans', sans-serif;color:#dcdddd;letter-spacing:0.687px;-webkit-text-stroke:0.55px #dcdddd;">MenuCommands.loctable</span>
<span class="t" id="r22d" style="left:1740.60px;top:1589.00px;font:400 26px/1 'Liberation Sans', sans-serif;color:#dcdddd;letter-spacing:0.655px;-webkit-text-stroke:0.55px #dcdddd;">get<i class="u">_</i>clipboard<i class="u">_</i>cont…</span>
<span class="t" id="r23a" style="left:495.65px;top:1638.00px;font:400 25px/1 'DejaVu Sans Mono','Liberation Mono',monospace;color:#dcdddd;letter-spacing:1.049px;-webkit-text-stroke:0.45px #dcdddd;">11:02:44.509</span>
<span class="t" id="r23b" style="left:779.62px;top:1638.00px;font:700 25.5px/1 'DejaVu Sans Mono','Liberation Mono',monospace;color:#dcdddd;letter-spacing:0.748px;-webkit-text-stroke:0.25px #dcdddd;">ES<i class="u">_</i>EVENT<i class="u">_</i>TYPE<i class="u">_</i>NOTIFY<i class="u">_</i>MMAP</span>
<span class="t" id="r23c" style="left:1233.80px;top:1637.00px;font:400 26px/1 'Liberation Sans', sans-serif;color:#dcdddd;letter-spacing:0.777px;-webkit-text-stroke:0.55px #dcdddd;">DictationManager.loctable</span>
<span class="t" id="r23d" style="left:1740.60px;top:1637.00px;font:400 26px/1 'Liberation Sans', sans-serif;color:#dcdddd;letter-spacing:0.655px;-webkit-text-stroke:0.55px #dcdddd;">get<i class="u">_</i>clipboard<i class="u">_</i>cont…</span>
<span class="t" id="r24a" style="left:495.35px;top:1686.00px;font:400 25px/1 'DejaVu Sans Mono','Liberation Mono',monospace;color:#dcdddd;letter-spacing:1.049px;-webkit-text-stroke:0.45px #dcdddd;">11:02:44.507</span>
<span class="t" id="r24b" style="left:779.42px;top:1686.00px;font:700 25.5px/1 'DejaVu Sans Mono','Liberation Mono',monospace;color:#dcdddd;letter-spacing:0.748px;-webkit-text-stroke:0.25px #dcdddd;">ES<i class="u">_</i>EVENT<i class="u">_</i>TYPE<i class="u">_</i>NOTIFY<i class="u">_</i>MMAP</span>
<span class="t" id="r24c" style="left:1233.80px;top:1685.00px;font:400 26px/1 'Liberation Sans', sans-serif;color:#dcdddd;letter-spacing:0.679px;-webkit-text-stroke:0.55px #dcdddd;">InputManager.loctable</span>
<span class="t" id="r24d" style="left:1739.70px;top:1685.00px;font:400 26px/1 'Liberation Sans', sans-serif;color:#dcdddd;letter-spacing:0.710px;-webkit-text-stroke:0.55px #dcdddd;">get<i class="u">_</i>clipboard<i class="u">_</i>cont…</span>
</div></div>
<div class="a" style="left:464px;top:1725px;width:1578px;height:2px;background:#45484b"></div>
<svg class="a" style="left:466.80px;top:1745.00px" width="27.3" height="24.4" viewBox="0 0 27.3 24.4"><path d="M11.05 1.50A3.0 3.0 0 0 1 16.25 1.50L26.89 19.90A3.0 3.0 0 0 1 24.30 24.40L3.00 24.40A3.0 3.0 0 0 1 0.41 19.90Z" fill="#ff9f0a"/><path d="M13.65 7.7V14.9" stroke="#000" stroke-width="2.3" stroke-linecap="round" fill="none"/><circle cx="13.65" cy="18.9" r="1.55" fill="#000"/></svg>
<div class="a" style="left:1943px;top:1736px;width:98px;height:40px;border-radius:10px;background:#646567;box-shadow:0 1px 2px rgba(0,0,0,.3)"></div>
<span class="t" id="subtree" style="left:143.50px;top:196.00px;font:700 27px/1 'Liberation Sans', sans-serif;color:#ececec;letter-spacing:0.254px;-webkit-text-stroke:0.3px #ececec;">Subtree: 1</span>
<span class="t" id="sapplet" style="left:192.65px;top:309.00px;font:400 25px/1 'DejaVu Sans Mono','Liberation Mono',monospace;color:#ececec;letter-spacing:1.049px;-webkit-text-stroke:1.0px #ececec;">applet</span>
<span class="t" id="title" style="left:417.30px;top:112.00px;font:700 31px/1 'Liberation Sans', sans-serif;color:#ececec;letter-spacing:-0.837px;">Event Facts</span>
<span class="t" id="tapplet" style="left:1981.35px;top:115.00px;font:400 25px/1 'DejaVu Sans Mono','Liberation Mono',monospace;color:#727375;letter-spacing:1.049px;-webkit-text-stroke:0.6px #727375;">applet</span>
<span class="t" id="tab1" style="left:868.60px;top:220.00px;font:400 26px/1 'Liberation Sans', sans-serif;color:#dfdfdf;letter-spacing:0.779px;-webkit-text-stroke:0.55px #dfdfdf;">Metadata</span>
<span class="t" id="tab2" style="left:1030.40px;top:220.00px;font:400 26px/1 'Liberation Sans', sans-serif;color:#ececec;letter-spacing:0.422px;-webkit-text-stroke:0.55px #ececec;">Event correlation 71</span>
<span class="t" id="tab3" style="left:1311.50px;top:220.00px;font:400 26px/1 'Liberation Sans', sans-serif;color:#dfdfdf;letter-spacing:0.847px;-webkit-text-stroke:0.55px #dfdfdf;">Initiating process</span>
<span class="t" id="tab4" style="left:1567.40px;top:220.00px;font:400 26px/1 'Liberation Sans', sans-serif;color:#dfdfdf;letter-spacing:-0.255px;-webkit-text-stroke:0.55px #dfdfdf;">JSON</span>
<span class="t" id="h1" style="left:464.00px;top:306.00px;font:700 27px/1 'Liberation Sans', sans-serif;color:#e6e6e6;letter-spacing:0.168px;-webkit-text-stroke:0.3px #e6e6e6;">Unified correlated events (71)</span>
<span class="t" id="hide" style="left:1970.70px;top:304.00px;font:400 26px/1 'Liberation Sans', sans-serif;color:#f0f0f0;letter-spacing:0.996px;-webkit-text-stroke:0.55px #f0f0f0;">Hide</span>
<span class="t" id="i1" style="left:520.70px;top:368.00px;font:400 26px/1 'Liberation Sans', sans-serif;color:#e3e3e3;letter-spacing:0.558px;-webkit-text-stroke:0.55px #e3e3e3;">All events we've successfully</span>
<span class="t" id="i2" style="left:879.30px;top:368.00px;font:700 27px/1 'Liberation Sans', sans-serif;color:#e8e8e8;letter-spacing:0.188px;-webkit-text-stroke:0.45px #e8e8e8;">correlated to</span>
<span class="t" id="i3" style="left:1051.80px;top:368.00px;font:700 26px/1 'DejaVu Sans Mono','Liberation Mono',monospace;color:#e8e8e8;letter-spacing:0.447px;-webkit-text-stroke:0.4px #e8e8e8;">applet</span>
<span class="t" id="i4" style="left:1156.40px;top:368.00px;font:400 26px/1 'Liberation Sans', sans-serif;color:#e3e3e3;letter-spacing:0.630px;-webkit-text-stroke:0.55px #e3e3e3;">will show in this unified table. Additionally, and if the events exist we've</span>
<span class="t" id="i5" style="left:519.20px;top:400.00px;font:400 26px/1 'Liberation Sans', sans-serif;color:#e3e3e3;letter-spacing:0.695px;-webkit-text-stroke:0.55px #e3e3e3;">partitioned out some high value events.</span>
<span class="t" id="th1" style="left:500.90px;top:472.00px;font:400 22px/1 'Liberation Sans', sans-serif;color:#fff;letter-spacing:0.880px;-webkit-text-stroke:0.6px #fff;">Timestamp</span>
<span class="t" id="th2" style="left:734.10px;top:472.00px;font:400 22px/1 'Liberation Sans', sans-serif;color:#fff;letter-spacing:0.843px;-webkit-text-stroke:0.6px #fff;">Event type</span>
<span class="t" id="th3" style="left:1239.00px;top:472.00px;font:400 22px/1 'Liberation Sans', sans-serif;color:#fff;letter-spacing:0.849px;-webkit-text-stroke:0.6px #fff;">Context</span>
<span class="t" id="th4" style="left:1744.20px;top:472.00px;font:400 22px/1 'Liberation Sans', sans-serif;color:#fff;letter-spacing:0.548px;-webkit-text-stroke:0.6px #fff;">Source Signing ID</span>
<span class="t" id="mm" style="left:512.20px;top:1744.00px;font:700 27px/1 'Liberation Sans', sans-serif;color:#e6e6e6;letter-spacing:0.502px;-webkit-text-stroke:0.3px #e6e6e6;">Memory mappings (48)</span>
<span class="t" id="show" style="left:1958.60px;top:1742.00px;font:400 26px/1 'Liberation Sans', sans-serif;color:#f0f0f0;letter-spacing:0.179px;-webkit-text-stroke:0.55px #f0f0f0;">Show</span>
<div class="a" style="left:112px;top:76px;width:2000px;height:1738px;border-radius:22px;box-sizing:border-box;border:1px solid rgba(255,255,255,.26);border-top-color:rgba(255,255,255,.34);pointer-events:none"></div>
</div></div></body></html>
